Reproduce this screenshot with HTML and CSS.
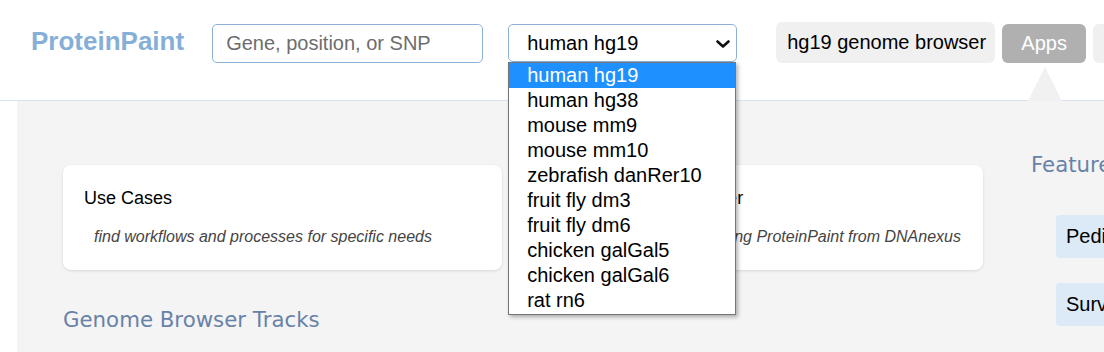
FILE: index.html
```html
<!DOCTYPE html>
<html>
<head>
<meta charset="utf-8">
<link rel="stylesheet" href="styles.css">
</head>
<body>
<header class="header">
  <div class="logo">ProteinPaint</div>
  <input class="search" type="text" placeholder="Gene, position, or SNP">
  <div class="genome-select">
    <span class="genome-value">human hg19</span>
    <svg class="chevron" width="14" height="8" viewBox="0 0 14 8"><polyline points="1.5,1.5 7,6.5 12.5,1.5" fill="none" stroke="#111" stroke-width="2.6" stroke-linecap="round" stroke-linejoin="round"/></svg>
    <ul class="genome-list">
      <li class="genome-opt is-active">human hg19</li>
      <li class="genome-opt">human hg38</li>
      <li class="genome-opt">mouse mm9</li>
      <li class="genome-opt">mouse mm10</li>
      <li class="genome-opt">zebrafish danRer10</li>
      <li class="genome-opt">fruit fly dm3</li>
      <li class="genome-opt">fruit fly dm6</li>
      <li class="genome-opt">chicken galGal5</li>
      <li class="genome-opt">chicken galGal6</li>
      <li class="genome-opt">rat rn6</li>
    </ul>
  </div>
  <div class="btn btn-browser">hg19 genome browser</div>
  <div class="btn btn-apps">Apps<span class="pointer"></span></div>
  <div class="btn btn-help">Help</div>
</header>
<main class="main">
  <section class="left-col">
    <div class="cards">
      <div class="card">
        <div class="card-title">Use Cases</div>
        <div class="card-sub">find workflows and processes for specific needs</div>
      </div>
      <div class="card">
        <div class="card-title">ProteinPaint Launcher</div>
        <div class="card-sub">instructions for launching ProteinPaint from DNAnexus</div>
      </div>
    </div>
    <h2 class="section-title tracks-title">Genome Browser Tracks</h2>
  </section>
  <section class="right-col">
    <h2 class="section-title">Features</h2>
    <div class="pills">
      <div class="pill">Pediatric Cancer Mutation</div>
      <div class="pill">Survival Analysis</div>
    </div>
  </section>
</main>
</body>
</html>
```
FILE: styles.css
```css
html, body {
  margin: 0;
  padding: 0;
  background: #fff;
  overflow: hidden;
  width: 1104px;
  height: 352px;
}
body {
  font-family: "Liberation Sans", Arial, sans-serif;
  color: #000;
}
.header {
  display: flex;
  align-items: flex-start;
  height: 78px;
  padding: 22px 0 0 31px;
  border-bottom: 1px solid #d9e3ef;
  white-space: nowrap;
  position: relative;
  z-index: 2;
}
.header > * {
  flex-shrink: 0;
}
.logo {
  font-weight: bold;
  font-size: 26px;
  line-height: 30px;
  color: #86afd8;
  margin-top: 4px;
}
.search {
  box-sizing: border-box;
  margin: 2px 0 0 28px;
  width: 271px;
  height: 39px;
  border: 1px solid #8db0d8;
  border-radius: 5px;
  padding: 0 0 0 13px;
  font-family: "Liberation Sans", Arial, sans-serif;
  font-size: 20px;
  outline: none;
}
.search::placeholder {
  color: #6d6d6d;
}
.genome-select {
  box-sizing: border-box;
  position: relative;
  margin: 2px 0 0 25px;
  width: 229px;
  height: 38px;
  border: 1px solid #8db0d8;
  border-radius: 5px;
  display: flex;
  align-items: center;
  padding-left: 18px;
  font-size: 20px;
}
.genome-value {
  flex: 1;
}
.chevron {
  margin-right: 6px;
  margin-top: 1px;
}
.genome-list {
  position: absolute;
  left: -1px;
  top: 37px;
  width: 228px;
  box-sizing: border-box;
  margin: 0;
  padding: 0 0 1px;
  list-style: none;
  background: #fff;
  border: 1px solid #767676;
  box-shadow: 2px 2px 4px rgba(0, 0, 0, 0.3);
}
.genome-opt {
  font-size: 20px;
  line-height: 25px;
  padding-left: 18px;
  color: #000;
}
.genome-opt.is-active {
  background: #1e90ff;
  color: #fff;
}
.btn {
  box-sizing: border-box;
  font-size: 20px;
  border-radius: 6px;
  position: relative;
}
.btn-browser {
  margin-left: 39px;
  height: 41px;
  line-height: 41px;
  padding: 0 9px 0 11px;
  background: #f0f0f0;
}
.btn-apps {
  margin: 2px 0 0 7px;
  width: 84px;
  height: 39px;
  line-height: 39px;
  text-align: center;
  background: #b0b0b0;
  color: #fff;
}
.pointer {
  position: absolute;
  left: 26px;
  top: 43px;
  width: 0;
  height: 0;
  border-left: 17px solid transparent;
  border-right: 17px solid transparent;
  border-bottom: 34px solid #f1f1f1;
}
.btn-help {
  margin: 2px 0 0 7px;
  height: 39px;
  line-height: 39px;
  padding: 0 20px;
  background: #f0f0f0;
}
.main {
  display: flex;
  margin-left: 17px;
  height: 251px;
  background: #f4f4f4;
  padding: 52px 0 0 46px;
  box-sizing: border-box;
  white-space: nowrap;
}
.left-col {
  width: 920px;
  flex-shrink: 0;
  margin-top: 12px;
}
.cards {
  display: flex;
  gap: 42px;
}
.card {
  box-sizing: border-box;
  width: 439px;
  height: 105px;
  background: #fff;
  border-radius: 8px;
  box-shadow: 0 1px 3px rgba(0, 0, 0, 0.12);
  padding: 23px 21px 0;
}
.card-title {
  font-size: 18px;
  line-height: 21px;
}
.card-sub {
  margin-top: 19px;
  padding-left: 10px;
  font-size: 16px;
  line-height: 18px;
  font-style: italic;
  color: #444;
}
.section-title {
  margin: 0;
  font-family: "DejaVu Sans", Verdana, sans-serif;
  font-weight: normal;
  font-size: 21.3px;
  line-height: 24px;
  color: #6882a8;
}
.tracks-title {
  margin-top: 38px;
}
.right-col {
  margin-left: 48px;
  flex-shrink: 0;
}
.pills {
  margin: 38px 0 0 25px;
  display: flex;
  flex-direction: column;
  gap: 25px;
  align-items: flex-start;
}
.pill {
  height: 43px;
  line-height: 43px;
  padding: 0 10px;
  font-size: 20px;
  background: #dce9f6;
  border-radius: 4px;
}
```
